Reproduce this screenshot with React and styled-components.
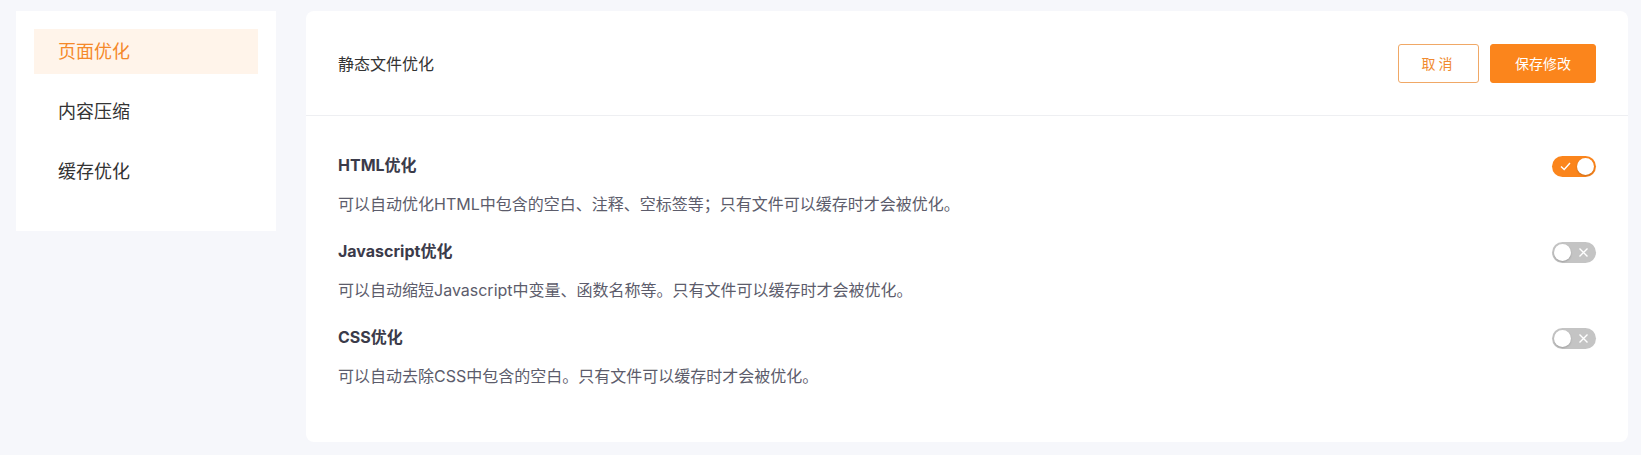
import React, { useState } from 'react'
import styled, { createGlobalStyle } from 'styled-components'

const GlobalStyle = createGlobalStyle`
  html, body {
    margin: 0;
    padding: 0;
    background: #f6f7fb;
    font-family: Inter, "Noto Sans CJK SC", sans-serif;
  }
`

const Page = styled.div`
  display: flex;
  align-items: flex-start;
  gap: 30px;
  padding: 11px 13px 13px 16px;
`

const Sidebar = styled.div`
  width: 260px;
  flex-shrink: 0;
  background: #fff;
  box-sizing: border-box;
  padding: 18px 18px 37px;
  display: flex;
  flex-direction: column;
  gap: 15px;
`

const NavItem = styled.div`
  height: 45px;
  box-sizing: border-box;
  display: flex;
  align-items: center;
  padding: 0 0 3px 24px;
  font-size: 18px;
  color: ${p => (p.active ? '#f5892a' : '#333')};
  background: ${p => (p.active ? '#fff4ea' : 'transparent')};
  cursor: pointer;
`

const Panel = styled.div`
  flex: 1;
  height: 431px;
  background: #fff;
  border-radius: 8px;
  box-sizing: border-box;
`

const Header = styled.div`
  height: 104px;
  border-bottom: 1px solid #eeeff2;
  display: flex;
  align-items: center;
  justify-content: space-between;
  padding: 0 32px;
`

const HeaderTitle = styled.div`
  font-size: 16px;
  color: #333;
`

const Actions = styled.div`
  display: flex;
  gap: 11px;
`

const Button = styled.button`
  height: 39px;
  width: ${p => p.w}px;
  border-radius: 3px;
  font-family: inherit;
  font-size: 14px;
  cursor: pointer;
  border: 1px solid ${p => (p.primary ? '#fb851c' : '#f0a866')};
  background: ${p => (p.primary ? '#fb851c' : '#fff')};
  color: ${p => (p.primary ? '#fff' : '#f08a30')};
  letter-spacing: ${p => (p.primary ? '0' : '3px')};
`

const Body = styled.div`
  padding: 36px 32px 0;
`

const Option = styled.div`
  margin-bottom: 22px;
`

const OptionHead = styled.div`
  display: flex;
  align-items: center;
  justify-content: space-between;
  height: 24px;
  margin-bottom: 16px;
`

const OptionTitle = styled.div`
  font-size: 16px;
  font-weight: 700;
  color: #3b3b4a;
`

const OptionDesc = styled.div`
  font-size: 16px;
  line-height: 24px;
  color: #5c5c6b;
`

const Track = styled.div`
  position: relative;
  width: 44px;
  height: 21px;
  margin-top: 5px;
  border-radius: 11px;
  background: ${p => (p.on ? '#fb851c' : '#c4c4c4')};
  cursor: pointer;
  flex-shrink: 0;
`

const Knob = styled.div`
  position: absolute;
  top: 2px;
  left: ${p => (p.on ? '25px' : '2px')};
  width: 17px;
  height: 17px;
  border-radius: 50%;
  background: #fff;
  box-shadow: 0 1px 2px rgba(0, 0, 0, 0.2);
`

const Mark = styled.svg`
  position: absolute;
  top: 5px;
  left: ${p => (p.on ? '8px' : '26px')};
`

function Toggle({ on, onClick }) {
  return (
    <Track on={on} onClick={onClick}>
      {on ? (
        <Mark on width="11" height="11" viewBox="0 0 11 11">
          <path d="M1 5.5 L4.2 8.5 L10 2" stroke="#fff" strokeWidth="1.4" fill="none" />
        </Mark>
      ) : (
        <Mark width="11" height="11" viewBox="0 0 11 11">
          <path d="M1.5 1.5 L9.5 9.5 M9.5 1.5 L1.5 9.5" stroke="#fff" strokeWidth="1.4" fill="none" />
        </Mark>
      )}
      <Knob on={on} />
    </Track>
  )
}

const options = [
  { key: 'html', title: 'HTML优化', desc: '可以自动优化HTML中包含的空白、注释、空标签等；只有文件可以缓存时才会被优化。' },
  { key: 'js', title: 'Javascript优化', desc: '可以自动缩短Javascript中变量、函数名称等。只有文件可以缓存时才会被优化。' },
  { key: 'css', title: 'CSS优化', desc: '可以自动去除CSS中包含的空白。只有文件可以缓存时才会被优化。' },
]

export default function App() {
  const [state, setState] = useState({ html: true, js: false, css: false })
  const [active, setActive] = useState(0)
  const nav = ['页面优化', '内容压缩', '缓存优化']

  return (
    <>
      <GlobalStyle />
      <Page>
        <Sidebar>
          {nav.map((n, i) => (
            <NavItem key={n} active={i === active} onClick={() => setActive(i)}>
              {n}
            </NavItem>
          ))}
        </Sidebar>
        <Panel>
          <Header>
            <HeaderTitle>静态文件优化</HeaderTitle>
            <Actions>
              <Button w={81}>取消</Button>
              <Button primary w={106}>保存修改</Button>
            </Actions>
          </Header>
          <Body>
            {options.map(o => (
              <Option key={o.key}>
                <OptionHead>
                  <OptionTitle>{o.title}</OptionTitle>
                  <Toggle on={state[o.key]} onClick={() => setState({ ...state, [o.key]: !state[o.key] })} />
                </OptionHead>
                <OptionDesc>{o.desc}</OptionDesc>
              </Option>
            ))}
          </Body>
        </Panel>
      </Page>
    </>
  )
}
